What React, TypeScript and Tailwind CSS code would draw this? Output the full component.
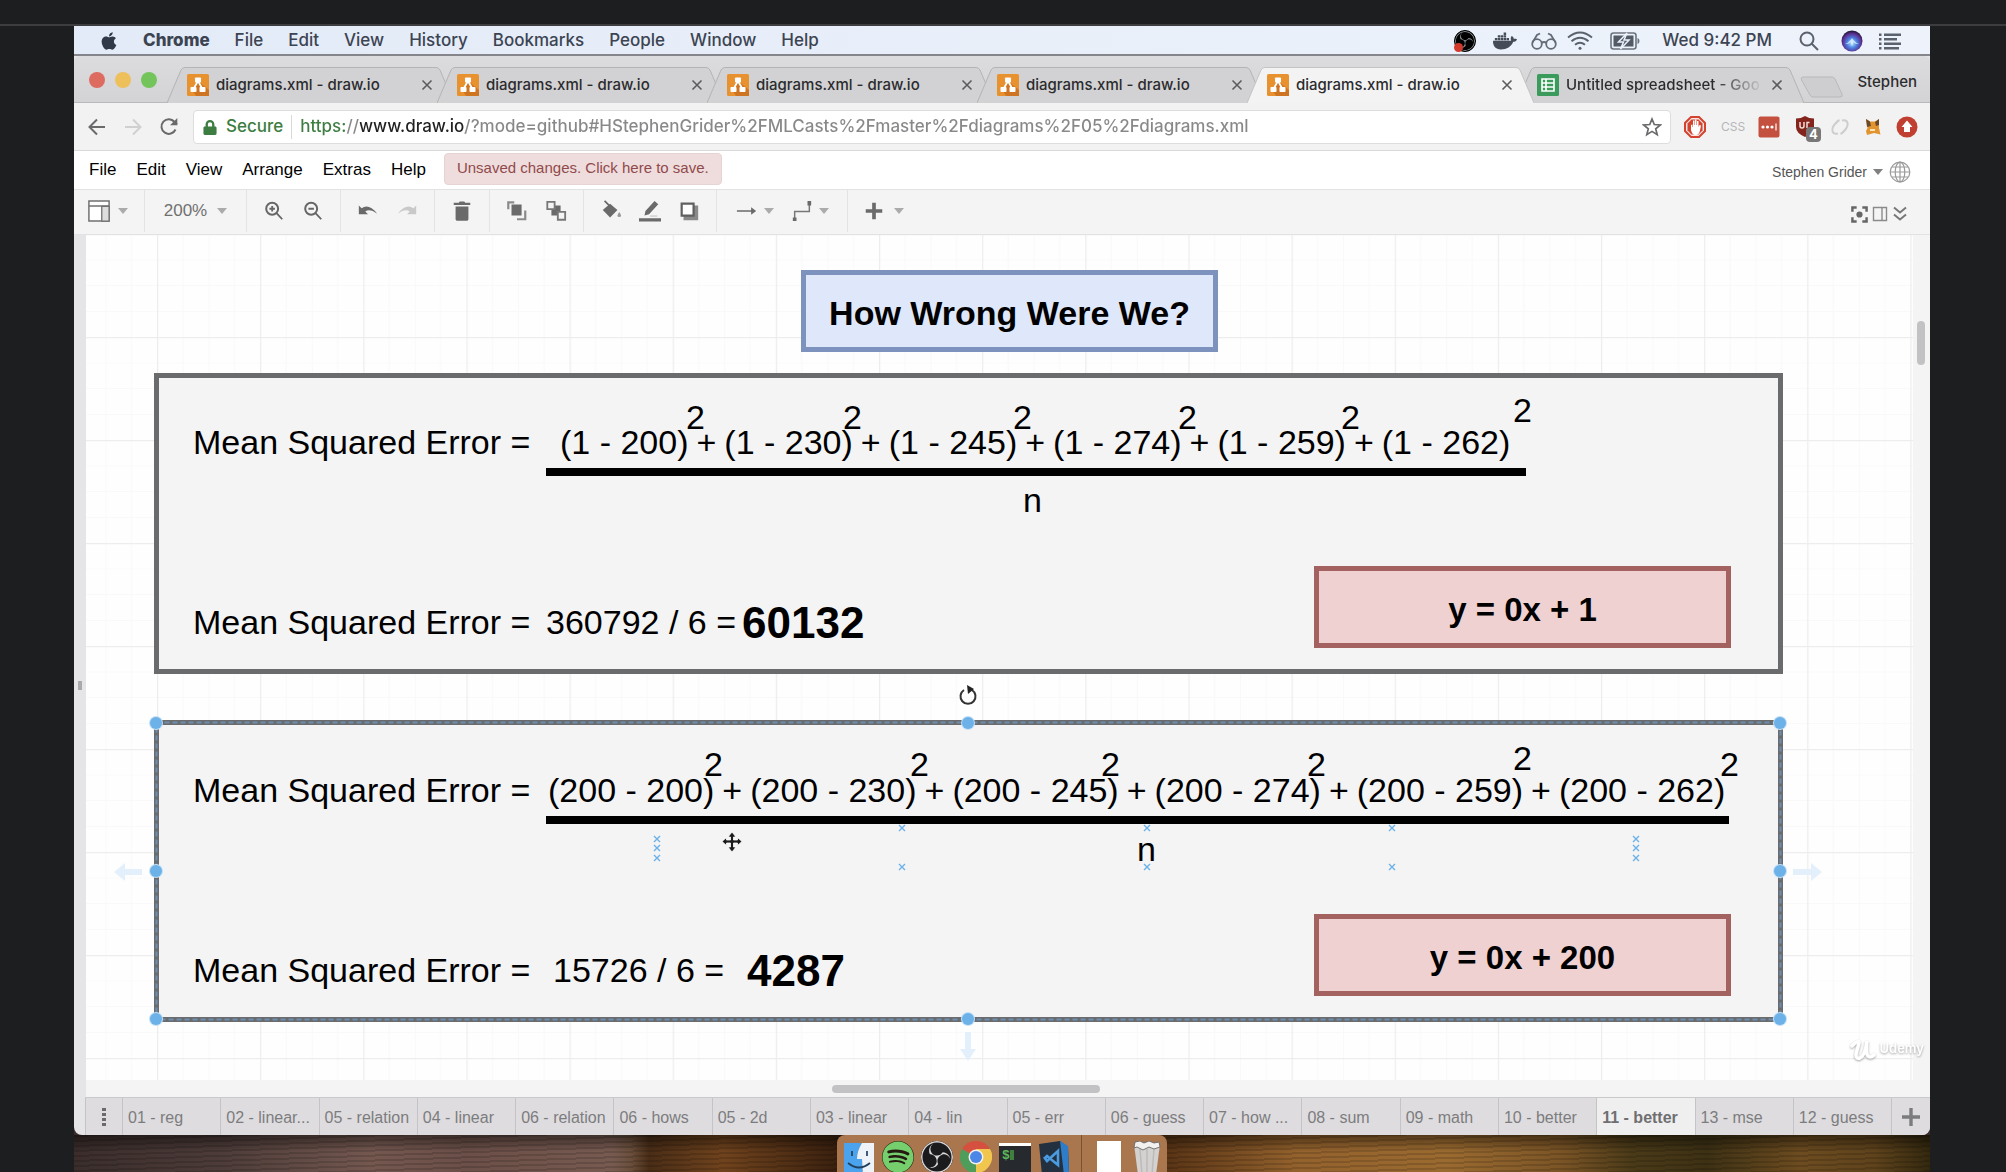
import type { ReactNode } from 'react';
import { FaApple, FaDocker, FaSpotify, FaLock } from 'react-icons/fa';
import { SiObsstudio } from 'react-icons/si';

/* ---------- icons ---------- */

const DrawioIcon = () => (
  <svg viewBox="0 0 22 22" className="h-[22px] w-[22px] shrink-0">
    <rect width="22" height="22" rx="1.5" fill="#e8912f" />
    <path d="M11 7 22 16v6H9L6 17z" fill="#cf7420" />
    <path d="M11 7 6.500 15M11 7l4.500 8" stroke="#fff" strokeWidth="1.800" />
    <rect x="8" y="3.500" width="6" height="5" rx=".8" fill="#fff" />
    <rect x="3.500" y="13" width="6" height="5" rx=".8" fill="#fff" />
    <rect x="12.500" y="13" width="6" height="5" rx=".8" fill="#fff" />
  </svg>
);

const SheetsIcon = () => (
  <svg viewBox="0 0 22 22" className="h-[22px] w-[22px] shrink-0">
    <rect width="22" height="22" rx="1.500" fill="#3a9b5c" />
    <path d="M5 5h12v12H5zM9 5v12M5 9h12M5 13h12" fill="none" stroke="#fff" strokeWidth="1.600" />
  </svg>
);

const Close = () => (
  <svg viewBox="0 0 12 12" className="h-3 w-3">
    <path d="M1.500 1.500l9 9M10.500 1.500l-9 9" stroke="#5c5c5e" strokeWidth="1.600" fill="none" />
  </svg>
);

const Caret = ({ dark }: { dark?: boolean }) => (
  <svg viewBox="0 0 10 6" className="h-[6px] w-[10px]">
    <path d="M0 0h10L5 6z" fill={dark ? '#808080' : '#ababab'} />
  </svg>
);

const Glasses = () => (
  <svg viewBox="0 0 26 22" className="h-[22px] w-[26px]" fill="none" stroke="#646b76" strokeWidth="1.800">
    <circle cx="6" cy="14" r="4.800" />
    <circle cx="20" cy="14" r="4.800" />
    <path d="M10.500 13q2.500-2 5 0M1.500 12.500 6 5l3-1.500M24.500 12.500 20 5l-3-1.500" />
  </svg>
);

const Wifi = () => (
  <svg viewBox="0 0 26 20" className="h-5 w-[26px]" fill="none" stroke="#5b626d" strokeWidth="1.900">
    <path d="M1 6.500Q13-3.500 25 6.500M4.500 10.200q8.500-7 17 0M8 13.700q5-4 10 0" />
    <circle cx="13" cy="17.300" r="1.500" fill="#5b626d" stroke="none" />
  </svg>
);

const Battery = () => (
  <svg viewBox="0 0 30 18" className="h-[18px] w-[30px]">
    <rect x="1" y="1" width="25" height="16" rx="2.500" fill="none" stroke="#6d737d" strokeWidth="1.600" />
    <path d="M27.500 6v6q2-.5 2-3t-2-3z" fill="#6d737d" />
    <rect x="3.500" y="3.500" width="20" height="11" fill="#545b67" />
    <path d="M17 1 8.500 10h5L10.500 17 19 8h-5z" fill="#545b67" stroke="#ebf1fb" strokeWidth="1.500" />
  </svg>
);

const Magnifier = () => (
  <svg viewBox="0 0 20 20" className="h-5 w-5" fill="none" stroke="#5b626d" strokeWidth="2">
    <circle cx="8" cy="8" r="6.500" />
    <path d="m12.500 12.500 6.500 6.500" />
  </svg>
);

const Siri = () => (
  <svg viewBox="0 0 22 22" className="h-[22px] w-[22px]">
    <defs>
      <radialGradient id="siri" cx=".5" cy=".6" r=".6">
        <stop offset="0" stopColor="#bfe9ff" />
        <stop offset=".4" stopColor="#4a7fe0" />
        <stop offset=".75" stopColor="#5b2f8f" />
        <stop offset="1" stopColor="#16142c" />
      </radialGradient>
    </defs>
    <circle cx="11" cy="11" r="10.500" fill="url(#siri)" />
    <path d="M4 14q4-1 7-6 3 5 7 6-4 .5-5.500-2L11 16l-1.500-4Q8 14.500 4 14z" fill="#d9f1ff" opacity=".85" />
  </svg>
);

const ListIcon = () => (
  <svg viewBox="0 0 24 18" className="h-[18px] w-6" fill="#5b626d">
    <path d="M6 1.500h17v2.500H6zM6 6h13v2.500H6zM6 10.500h17V13H6zM6 15h15v2.500H6z" />
    <path d="M1 1.500h2.500v2.500H1zM1 6h2.500v2.500H1zM1 10.500h2.500V13H1zM1 15h2.500v2.500H1z" />
  </svg>
);

const BackArrow = ({ faint }: { faint?: boolean }) => (
  <svg viewBox="0 0 18 18" className="h-[18px] w-[18px]" fill="none" stroke={faint ? '#d0d0d0' : '#6a6a6c'} strokeWidth="2">
    {faint ? <path d="M1 9h15M9 1.500 16.500 9 9 16.500" /> : <path d="M17 9H2M9 1.500 1.500 9 9 16.500" />}
  </svg>
);

const Reload = () => (
  <svg viewBox="0 0 20 20" className="h-5 w-5" fill="none" stroke="#6a6a6c" strokeWidth="2">
    <path d="M16.500 12.500A7.300 7.300 0 1 1 15.500 5L18 7.500" />
    <path d="M18.300 1v7.300H11z" fill="#6a6a6c" stroke="none" />
  </svg>
);

const Star = () => (
  <svg viewBox="0 0 20 20" className="h-5 w-5" fill="none" stroke="#6a6a6c" strokeWidth="1.700">
    <path d="m10 2 2.300 5.500 6 .5-4.600 3.800 1.500 5.800L10 14.400l-5.200 3.200 1.500-5.800L1.700 8l6-.5z" />
  </svg>
);

const AdBlock = () => (
  <svg viewBox="0 0 22 22" className="h-[22px] w-[22px]">
    <path d="M7 1h8l6 6v8l-6 6H7l-6-6V7z" fill="#f6e7e5" stroke="#d3432f" strokeWidth="2" />
    <path d="M7.500 3.500h7l4 4v7l-4 4h-7l-4-4v-7z" fill="#d3432f" />
    <path d="M7 9v5q1 5 4.500 5T16 14.500l1-5-1.500-.5-1 2V5H13v4h-.5V3.500H11V9h-.5V4.500H9V11h-.5V8.500z" fill="#fff" />
  </svg>
);

const PassIcon = () => (
  <svg viewBox="0 0 22 22" className="h-[22px] w-[22px]">
    <rect x=".5" y=".5" width="21" height="21" rx="2" fill="#c4503f" />
    <circle cx="5" cy="11" r="1.600" fill="#fff" />
    <circle cx="9.500" cy="11" r="1.600" fill="#fff" />
    <circle cx="14" cy="11" r="1.600" fill="#fff" />
    <path d="M18 7.500v7" stroke="#fff" strokeWidth="1.200" />
  </svg>
);

const Shield = () => (
  <svg viewBox="0 0 20 22" className="h-[22px] w-5">
    <path d="M10 0q4 2.500 9 2.500V11q0 6-9 10Q1 17 1 11V2.500Q6 2.500 10 0z" fill="#84251d" />
    <path d="M5 6v4q0 2 2 2t2-2V6M12 12V6.500h2.500" fill="none" stroke="#f2dcda" strokeWidth="1.500" />
  </svg>
);

const Orbit = () => (
  <svg viewBox="0 0 20 20" className="h-5 w-5" fill="none" stroke="#cdcdcf" strokeWidth="2">
    <path d="M8 16.500C2 18 .5 12 5 7q3-3.500 4.500-4M12 3.500C18 2 19.500 8 15 13q-3 3.500-4.500 4" />
  </svg>
);

const Cat = () => (
  <svg viewBox="0 0 16 18" className="h-[18px] w-4">
    <path d="M1 1l4 2.500h5L14 1v9l1.500 6.500L9 15l-7 2-1-4 1.500-3z" fill="#e2952f" />
    <path d="M1 1l4 2.500L6 8 2 9zM10 4l4-3v6l-3 1z" fill="#6b4a2a" />
    <path d="M5 11h5v2H5z" fill="#f8e2b8" />
  </svg>
);

const UpArrow = () => (
  <svg viewBox="0 0 22 22" className="h-[22px] w-[22px]">
    <circle cx="11" cy="11" r="10.500" fill="#c03f31" />
    <path d="M11 4.500 16.500 11H14v5H8v-5H5.500z" fill="#fff" />
  </svg>
);

const Globe = () => (
  <svg viewBox="0 0 22 22" className="h-[22px] w-[22px]" fill="none" stroke="#9a9a9a" strokeWidth="1.200">
    <circle cx="11" cy="11" r="9.800" />
    <ellipse cx="11" cy="11" rx="4.800" ry="9.800" />
    <path d="M11 1v20M1 11h20M3 6h16M3 16h16" />
  </svg>
);

/* toolbar glyphs share one 24-unit grid */
const Tool = ({ children, faint }: { children: ReactNode; faint?: boolean }) => (
  <svg viewBox="0 0 24 24" className="h-[22px] w-[22px]" fill={faint ? '#c9c9c9' : '#6a6a6a'}>
    {children}
  </svg>
);

/* ---------- browser chrome ---------- */

function BrowserTab({ title, icon, active, faded }: { title: string; icon: ReactNode; active?: boolean; faded?: boolean }) {
  return (
    <div className={active ? 'relative z-10 -ml-[17px] h-9 w-[287px] shrink' : 'relative -ml-[17px] h-9 w-[287px] shrink'}>
      <svg viewBox="0 0 287 36" preserveAspectRatio="none" className="absolute inset-0 h-full w-full">
        <path
          d="M0 36 14 3Q15.500.5 18 .5H269Q271.500.5 273 3L287 36"
          fill={active ? '#f4f3f4' : '#d2d1d3'}
          stroke={active ? '#c4c3c5' : '#b4b3b5'}
        />
      </svg>
      <div className="relative flex h-full items-center gap-[7px] pr-[21px] pl-5">
        {icon}
        <span
          className={
            faded
              ? 'min-w-0 flex-1 bg-gradient-to-r from-[#2b2b2d] from-75% to-transparent to-100% bg-clip-text text-[15px] font-medium whitespace-nowrap text-transparent'
              : 'min-w-0 flex-1 overflow-hidden text-[15px] font-medium whitespace-nowrap text-[#2b2b2d]'
          }
        >
          {title}
        </span>
        <button type="button" aria-label={`Close ${title}`}>
          <Close />
        </button>
      </div>
    </div>
  );
}

function MenuBar() {
  const items = ['File', 'Edit', 'View', 'History', 'Bookmarks', 'People', 'Window', 'Help'];
  return (
    <header className="flex h-7 items-center bg-gradient-to-r from-[#e3ebf8] to-[#eef3fb] pt-[2px] pr-7 pl-[26px] text-[17px] font-medium text-[#3c4452]">
      <nav aria-label="System menu" className="flex items-center gap-[25px]">
        <button type="button" aria-label="Apple menu">
          <FaApple className="h-5 w-[18px] text-[#303947]" />
        </button>
        <button type="button" className="font-extrabold">Chrome</button>
        {items.map((item) => (
          <button type="button" key={item}>{item}</button>
        ))}
      </nav>
      <div className="ml-auto flex items-center">
        <span className="relative mr-[17px] block h-[22px] w-[22px]">
          <SiObsstudio className="h-[22px] w-[22px] rounded-full border border-black bg-black text-[#8f9399]" />
          <span className="absolute bottom-0 left-0 h-[9px] w-[9px] rounded-full bg-[#d43a2c]" />
        </span>
        <FaDocker className="mr-[14px] h-6 w-6 text-[#454c58]" />
        <span className="mr-[10px]"><Glasses /></span>
        <span className="mr-[17px]"><Wifi /></span>
        <span className="mr-[22px]"><Battery /></span>
        <span className="mr-[27px]">Wed 9:42 PM</span>
        <button type="button" aria-label="Spotlight" className="mr-[22px]"><Magnifier /></button>
        <button type="button" aria-label="Siri" className="mr-[15px]"><Siri /></button>
        <button type="button" aria-label="Notification centre"><ListIcon /></button>
      </div>
    </header>
  );
}

function TabStrip() {
  return (
    <div className="flex h-[47px] items-end rounded-t-md bg-gradient-to-b from-[#dcdbdd] to-[#d3d2d4] shadow-[inset_0_-1px_0_#b9b8ba]">
      <div className="mb-[15px] ml-[15px] flex w-[95px] gap-[10px]">
        <button type="button" aria-label="Close window" className="h-4 w-4 rounded-full bg-[#dd6b60]" />
        <button type="button" aria-label="Minimise window" className="h-4 w-4 rounded-full bg-[#eec05c]" />
        <button type="button" aria-label="Zoom window" className="h-4 w-4 rounded-full bg-[#74c45c]" />
      </div>
      <BrowserTab title="diagrams.xml - draw.io" icon={<DrawioIcon />} />
      <BrowserTab title="diagrams.xml - draw.io" icon={<DrawioIcon />} />
      <BrowserTab title="diagrams.xml - draw.io" icon={<DrawioIcon />} />
      <BrowserTab title="diagrams.xml - draw.io" icon={<DrawioIcon />} />
      <BrowserTab title="diagrams.xml - draw.io" icon={<DrawioIcon />} active />
      <BrowserTab title="Untitled spreadsheet - Goo" icon={<SheetsIcon />} faded />
      <button type="button" aria-label="New tab" className="mb-[5px] -ml-[4px]">
        <svg viewBox="0 0 44 22" className="h-[22px] w-11">
          <path d="M3 1h29q2 0 3 2l7 15q1 3-2 3H13q-2 0-3-2L1.500 4Q.5 1 3 1z" fill="#cecdcf" stroke="#b9b8ba" />
        </svg>
      </button>
      <button type="button" className="mr-[13px] mb-[10px] ml-auto text-[15px] font-medium text-[#2b2b2d]">Stephen</button>
    </div>
  );
}

function AddressBar() {
  return (
    <div className="flex h-12 items-center border-b border-[#d9d8da] bg-[#f3f2f3] pt-px pr-3 pl-[14px]">
      <button type="button" aria-label="Back"><BackArrow /></button>
      <button type="button" aria-label="Forward" className="ml-[18px]"><BackArrow faint /></button>
      <button type="button" aria-label="Reload" className="mr-[14px] ml-[17px]"><Reload /></button>
      <div className="flex h-[34px] min-w-0 flex-1 items-center rounded border border-[#dddcde] bg-white px-2 text-[17px] font-medium">
        <FaLock className="mr-2 h-[15px] w-4 text-[#3d7d41]" />
        <span className="text-[#3d7d41]">Secure</span>
        <span className="mx-2 h-6 w-px bg-[#d8d8d8]" />
        <input
          aria-label="Address"
          className="min-w-0 flex-1 bg-[linear-gradient(90deg,#3d7d41_45px,#88888a_45px,#88888a_60px,#202022_60px,#202022_165px,#88888a_165px)] bg-clip-text text-transparent outline-none"
          defaultValue="https://www.draw.io/?mode=github#HStephenGrider%2FMLCasts%2Fmaster%2Fdiagrams%2F05%2Fdiagrams.xml"
        />
        <button type="button" aria-label="Bookmark this page"><Star /></button>
      </div>
      <div className="ml-[13px] flex items-center gap-[15px]">
        <button type="button" aria-label="Ad blocker"><AdBlock /></button>
        <button type="button" className="w-[22px] text-xs text-[#b5b5b7]">CSS</button>
        <button type="button" aria-label="Password manager"><PassIcon /></button>
        <button type="button" aria-label="Content blocker, 4 blocked" className="relative">
          <Shield />
          <span className="absolute -right-[6px] -bottom-[4px] h-[15px] w-[15px] rounded-sm bg-[#777] text-center text-[13px] leading-[15px] font-bold text-white">4</span>
        </button>
        <button type="button" aria-label="Orbit extension"><Orbit /></button>
        <button type="button" aria-label="Cat extension"><Cat /></button>
        <button type="button" aria-label="Update"><UpArrow /></button>
      </div>
    </div>
  );
}

/* ---------- diagram editor ---------- */

function EditorMenu() {
  return (
    <div className="flex h-[38px] items-center bg-white pr-[19px] pl-[15px] font-['Liberation_Sans',Arial,sans-serif]">
      <nav aria-label="Editor menu" className="flex items-center gap-5 text-[17px] text-black">
        {['File', 'Edit', 'View', 'Arrange', 'Extras', 'Help'].map((item) => (
          <button type="button" key={item}>{item}</button>
        ))}
      </nav>
      <button type="button" className="mb-[3px] ml-[18px] h-8 rounded border border-[#e6d3d4] bg-[#efdcdd] px-3 text-[15px] whitespace-nowrap text-[#8f4a4b]">
        Unsaved changes. Click here to save.
      </button>
      <button type="button" className="mt-1 ml-auto flex items-center gap-[6px] text-sm text-[#555]">
        Stephen Grider <Caret dark />
      </button>
      <button type="button" aria-label="Language" className="mt-1 ml-[6px]"><Globe /></button>
    </div>
  );
}

function Toolbar() {
  const group = 'flex h-full items-center justify-center border-r border-[#e3e3e3]';
  return (
    <div className="flex h-[46px] items-center border-t border-b border-[#e2e2e2] bg-[#f4f4f4] pb-[2px] font-['Liberation_Sans',Arial,sans-serif] text-[17px] text-[#707070]">
      <div className={`${group} w-[71px] pr-[2px]`}>
        <button type="button" aria-label="View" className="flex items-center gap-2">
          <Tool>
            <path d="M1 1h22v22H1z" fill="#fff" stroke="#707070" strokeWidth="1.600" />
            <path d="M15 7h8v16h-8z" fill="#ddd" stroke="#707070" strokeWidth="1.400" />
            <path d="M1 6.500h22" stroke="#707070" strokeWidth="1.600" />
          </Tool>
          <Caret />
        </button>
      </div>
      <div className={`${group} w-[102px]`}>
        <button type="button" className="flex items-center gap-[10px]">200% <Caret /></button>
      </div>
      <div className={`${group} w-[94px] gap-[17px]`}>
        <button type="button" aria-label="Zoom in">
          <Tool>
            <circle cx="10" cy="9.500" r="6.500" fill="none" stroke="#666" strokeWidth="2.200" />
            <path d="m15 14.500 6 6.500M7 9.500h6M10 6.500v6" stroke="#666" strokeWidth="2" />
          </Tool>
        </button>
        <button type="button" aria-label="Zoom out">
          <Tool>
            <circle cx="10" cy="9.500" r="6.500" fill="none" stroke="#666" strokeWidth="2.200" />
            <path d="m15 14.500 6 6.500M7 9.500h6" stroke="#666" strokeWidth="2" />
          </Tool>
        </button>
      </div>
      <div className={`${group} w-[94px] gap-[17px]`}>
        <button type="button" aria-label="Undo">
          <Tool><path d="M2 6l3 3q8-5.500 17 6-8-6-13-2.500l3 3H2z" /></Tool>
        </button>
        <button type="button" aria-label="Redo">
          <Tool faint><path d="M22 6l-3 3Q11 3.500 2 15q8-6 13-2.500l-3 3h10z" /></Tool>
        </button>
      </div>
      <div className={`${group} w-[55px]`}>
        <button type="button" aria-label="Delete">
          <Tool><path d="M3 3H8.500l1-1.500h5L15.500 3H21v2.500H3zM5 7h14v14q0 1.500-1.500 1.500h-11Q5 22.500 5 21z" /></Tool>
        </button>
      </div>
      <div className={`${group} w-[94px] gap-[17px]`}>
        <button type="button" aria-label="To front">
          <Tool>
            <path d="M6 5h11v12H6z" />
            <path d="M9 2.500H2.500V10M21 11.500V21h-9" fill="none" stroke="#8a8a8a" strokeWidth="2.400" />
          </Tool>
        </button>
        <button type="button" aria-label="To back">
          <Tool>
            <path d="M7 6h10v11H7z" />
            <path d="M2.500 2h8v8h-8zM14 13h8v8.500h-8z" fill="#f4f4f4" stroke="#777" strokeWidth="2" />
          </Tool>
        </button>
      </div>
      <div className={`${group} w-[133px] gap-[17px]`}>
        <button type="button" aria-label="Fill colour">
          <Tool>
            <path d="M3 11 11 4l8 7-8 8z" />
            <path d="m5 1 6 6" stroke="#666" strokeWidth="1.800" />
            <path d="M21 13q-4 5.500 0 5.500t0-5.500z" fill="#999" />
          </Tool>
        </button>
        <button type="button" aria-label="Line colour">
          <Tool>
            <path d="M-1 20h26v3.500H-1zM6 17l1-5L17 1l4 3.500-10 11z" />
            <path d="M12 17.500h8" stroke="#bbb" />
          </Tool>
        </button>
        <button type="button" aria-label="Shadow">
          <Tool>
            <path d="M6 6h16v16H6z" fill="#8a8a8a" />
            <path d="M4 4h13v13H4z" fill="#fff" stroke="#606060" strokeWidth="2.400" />
          </Tool>
        </button>
      </div>
      <div className={`${group} w-[131px] gap-[17px]`}>
        <button type="button" aria-label="Connection" className="flex items-center gap-[6px]">
          <Tool><path d="M1 11.300h15.500V8l5.500 4-5.500 4v-3.200H1z" /></Tool>
          <Caret />
        </button>
        <button type="button" aria-label="Waypoints" className="flex items-center gap-[6px]">
          <Tool>
            <path d="M4 22V12.500h16V3" fill="none" stroke="#777" strokeWidth="1.600" />
            <path d="M2 19h4v4H2zM18 1h4v5h-4z" />
          </Tool>
          <Caret />
        </button>
      </div>
      <div className="flex h-full items-center pl-[15px]">
        <button type="button" aria-label="Insert" className="flex items-center gap-[9px]">
          <Tool><path d="M10 3h4v7h7v4h-7v7h-4v-7H3v-4h7z" /></Tool>
          <Caret />
        </button>
      </div>
      <div className="mt-[6px] mr-[22px] ml-auto flex items-center gap-1">
        <button type="button" aria-label="Fullscreen">
          <svg viewBox="0 0 18 18" className="h-[17px] w-[17px]" fill="none" stroke="#666" strokeWidth="2.600">
            <path d="M1.500 6V1.500H6M12 1.500h4.500V6M16.500 12v4.500H12M6 16.500H1.500V12" />
            <circle cx="9" cy="9" r="2" fill="#666" />
          </svg>
        </button>
        <button type="button" aria-label="Format panel">
          <svg viewBox="0 0 16 16" className="h-4 w-4" fill="none" stroke="#8a8a8a" strokeWidth="1.400">
            <path d="M1.500 1.500h13v13h-13zM10 1.500v13" />
          </svg>
        </button>
        <button type="button" aria-label="Collapse">
          <svg viewBox="0 0 16 16" className="h-4 w-4" fill="none" stroke="#777" strokeWidth="2">
            <path d="m2 1.500 6 5 6-5M2 8.500l6 5 6-5" />
          </svg>
        </button>
      </div>
    </div>
  );
}

const label = 'absolute text-[34px] leading-10 whitespace-pre text-black';
const total = 'absolute text-[44px] leading-[52px] font-bold text-black';
const panel = 'absolute left-[68px] w-[1629px] border-[5px] border-[#6a6b6c] bg-[#f4f4f5]';
const equation =
  'absolute left-[1228px] flex h-[82px] w-[417px] items-center justify-center border-[5px] border-[#a3625f] bg-[#efd1d2] pt-[6px] text-[33px] font-bold text-black';

const squares = [
  'left-[600px] top-[162px]', 'left-[757px] top-[162px]', 'left-[927px] top-[162px]',
  'left-[1092px] top-[162px]', 'left-[1255px] top-[162px]', 'left-[1427px] top-[155px]',
  'left-[618px] top-[509px]', 'left-[824px] top-[509px]', 'left-[1015px] top-[509px]',
  'left-[1221px] top-[509px]', 'left-[1427px] top-[503px]', 'left-[1634px] top-[509px]',
];

const handles = [
  'left-[64px] top-[482px]', 'left-[876px] top-[482px]', 'left-[1688px] top-[482px]',
  'left-[64px] top-[630px]', 'left-[1688px] top-[630px]',
  'left-[64px] top-[778px]', 'left-[876px] top-[778px]', 'left-[1688px] top-[778px]',
];

const anchors = [
  [571, 604], [571, 613], [571, 623], [816, 593], [816, 632], [1061, 593],
  [1061, 632], [1306, 593], [1306, 632], [1550, 604], [1550, 613], [1550, 623],
];

function Sum({ terms, place }: { terms: string[]; place: string }) {
  return (
    <div className={`absolute flex gap-2 text-[34px] leading-10 whitespace-nowrap text-black ${place}`}>
      {terms.map((term, i) => (
        <span key={term} className="flex gap-2">
          {i > 0 && <span>+</span>}
          <span>{term}</span>
        </span>
      ))}
    </div>
  );
}

function Canvas() {
  const seen = [200, 230, 245, 274, 259, 262];
  return (
    <main className="relative min-h-[845px] min-w-0 flex-1 overflow-hidden bg-[#fefefe] font-['Liberation_Sans',Arial,sans-serif]">
      <svg className="absolute inset-0 h-full w-full">
        <defs>
          <pattern id="grid" x="71" y="102" width="103.140" height="103" patternUnits="userSpaceOnUse">
            <path d="M26 0v103M52 0v103M77.500 0v103M0 26h103.140M0 51.500h103.140M0 77.500h103.140" stroke="#f9f9fa" fill="none" />
            <path d="M.5 0v103M0 .5h103.140" stroke="#ededee" strokeWidth="1.500" fill="none" />
          </pattern>
        </defs>
        <rect width="100%" height="100%" fill="url(#grid)" />
      </svg>

      <div className="absolute top-[35px] left-[715px] flex h-[82px] w-[417px] items-center justify-center border-[5px] border-[#7d93bd] bg-[#dfe8fa] pt-1 text-[34px] font-bold text-black">
        How Wrong Were We?
      </div>

      <div className={`${panel} top-[138px] h-[301px]`} />
      <div className={`${panel} top-[485px] h-[302px]`} />

      <div className={`${label} top-[187px] left-[107px]`}>Mean Squared Error =</div>
      <Sum place="top-[187px] left-[474px]" terms={seen.map((v) => `(1 - ${v})`)} />
      <div className="absolute top-[233px] left-[460px] h-2 w-[980px] bg-black" />
      <div className={`${label} top-[245px] left-[937px]`}>n</div>
      <div className={`${label} top-[367px] left-[107px]`}>Mean Squared Error =</div>
      <div className={`${label} top-[367px] left-[460px]`}>360792 / 6 =</div>
      <div className={`${total} top-[362px] left-[656px]`}>60132</div>
      <div className={`${equation} top-[331px]`}>y = 0x + 1</div>

      <div className={`${label} top-[535px] left-[107px]`}>Mean Squared Error =</div>
      <Sum place="top-[535px] left-[462px]" terms={seen.map((v) => `(200 - ${v})`)} />
      <div className="absolute top-[581px] left-[460px] h-2 w-[1183px] bg-black" />
      <div className={`${label} top-[594px] left-[1051px]`}>n</div>
      <div className={`${label} top-[715px] left-[107px]`}>Mean Squared Error =</div>
      <div className={`${label} top-[715px] left-[467px]`}>15726 / 6 =</div>
      <div className={`${total} top-[710px] left-[661px]`}>4287</div>
      <div className={`${equation} top-[679px]`}>y = 0x + 200</div>

      {squares.map((place) => (
        <div key={place} className={`${label} ${place}`}>2</div>
      ))}

      {/* selection outline, connection points and direction arrows */}
      <svg className="absolute inset-0 h-full w-full" fill="none">
        <rect x="70.500" y="487.500" width="1624" height="297" stroke="#6d8db0" strokeWidth="2" strokeDasharray="5 3" />
        {anchors.map(([x, y]) => (
          <path key={`${x}-${y}`} d={`M${x - 3} ${y - 3}l6 6m0-6-6 6`} stroke="#6cb1e8" strokeWidth="1.400" />
        ))}
        <g fill="#e3f0fc">
          <path d="M28 637l11-9v6h17v6H39v6z" />
          <path d="M1736 637l-11-9v6h-18v6h18v6z" />
          <path d="M882 826l-8-12h5v-17h6v17h5z" />
        </g>
        <g stroke="#333" strokeWidth="2">
          <path d="M878 455a7.500 7.500 0 1 0 8 0" />
          <path d="M881 450l7 4-6 5z" fill="#222" stroke="none" />
        </g>
        <path
          d="M646 597l4 5h-2.500v3h4v-2.500l4.500 4-4.500 4V608h-4v4h2.500l-4 5-4-5h2.500v-4h-4v2.500l-4.500-4 4.500-4v2.500h4v-3H642z"
          fill="#1c1c1c"
          stroke="#fff"
          strokeWidth=".8"
        />
      </svg>
      {handles.map((place) => (
        <button
          type="button"
          key={place}
          aria-label="Resize handle"
          className={`absolute h-3 w-3 rounded-full bg-[#6cb1e8] ring-1 ring-[#c5e0f6] ${place}`}
        />
      ))}
    </main>
  );
}

function PageTabs() {
  const pages = [
    '01 - reg', '02 - linear...', '05 - relation', '04 - linear', '06 - relation', '06 - hows',
    '05 - 2d', '03 - linear', '04 - lin', '05 - err', '06 - guess', '07 - how ...', '08 - sum',
    '09 - math', '10 - better', '11 - better', '13 - mse', '12 - guess',
  ];
  return (
    <footer className="ml-[11px] flex h-[38px] border-t border-[#c9c8ca] bg-[#dedcdf] font-['Liberation_Sans',Arial,sans-serif] text-[#7c7c7e]">
      <button type="button" aria-label="Pages" className="flex w-[38px] shrink-0 items-center justify-center border-r border-l border-[#c4c3c5]">
        <svg viewBox="0 0 4 18" className="h-[18px] w-1" fill="#6a6a6c">
          <path d="M0 0h4v3H0zM0 5h4v3H0zM0 10h4v3H0zM0 15h4v3H0z" />
        </svg>
      </button>
      {pages.map((page) => (
        <button
          type="button"
          key={page}
          className={
            page === '11 - better'
              ? 'min-w-0 flex-1 overflow-hidden border-r border-[#c4c3c5] bg-[#f0eff0] pt-[2px] pl-[5px] text-left text-base font-bold whitespace-nowrap text-[#6f6f71]'
              : 'min-w-0 flex-1 overflow-hidden border-r border-[#c4c3c5] pt-[2px] pl-[5px] text-left text-base whitespace-nowrap'
          }
        >
          {page}
        </button>
      ))}
      <button type="button" aria-label="Insert page" className="flex w-[38px] shrink-0 items-center justify-center">
        <svg viewBox="0 0 18 18" className="h-[18px] w-[18px]" fill="#7c7c7e">
          <path d="M7.300 0h3.400v7.300H18v3.400h-7.300V18H7.300v-7.300H0V7.300h7.300z" />
        </svg>
      </button>
    </footer>
  );
}

/* ---------- dock ---------- */

function Dock() {
  return (
    <div className="flex h-[37px] justify-center overflow-hidden bg-[linear-gradient(180deg,rgba(0,0,0,0.45),transparent_45%),repeating-linear-gradient(178deg,rgba(0,0,0,0.14)_0_2px,transparent_2px_5px),linear-gradient(90deg,#3a2d2b_0%,#4d3c39_8%,#745850_16%,#6b4f48_21%,#775b51_29%,#6b4f3c_30%,#4a2d16_31%,#70431d_35%,#3b210f_41%,#5a3516_59%,#94622d_66%,#9a6a30_74%,#7c5526_80%,#4a3a18_84%,#3d3114_88%,#6d4c20_93%,#5f431c_97%,#33280f_100%)]">
      <div className="flex h-12 items-start gap-[7px] rounded-t-lg bg-[#a9764e] px-[6px] pt-[6px]">
        <button type="button" aria-label="Finder">
          <svg viewBox="0 0 32 34" className="h-[34px] w-8">
            <path d="M1 2h18q-5 8-5 16h5l1 16H1z" fill="#4aa3ec" />
            <path d="M19 2h12v32H20l-1-16h-5q0-8 5-16z" fill="#eef3fa" />
            <path d="M9 10v5M24 10v5M5 22q11 9 22 0" stroke="#20405f" strokeWidth="1.700" fill="none" />
          </svg>
        </button>
        <button type="button" aria-label="Spotify" className="h-8 w-8 rounded-full bg-[#241a12]">
          <FaSpotify className="h-8 w-8 text-[#74cf6c]" />
        </button>
        <button type="button" aria-label="OBS" className="h-8 w-8 rounded-full">
          <SiObsstudio className="h-8 w-8 rounded-full bg-[#1b1a1c] text-[#d8d5d6]" />
        </button>
        <button type="button" aria-label="Chrome">
          <svg viewBox="0 0 32 32" className="h-8 w-8">
            <path d="M16 16 2.140 8A16 16 0 0 1 29.860 8z" fill="#d5503f" />
            <path d="M16 16 29.860 8A16 16 0 0 1 16 32z" fill="#f0c64e" />
            <path d="M16 16v16A16 16 0 0 1 2.140 8z" fill="#4f9d5b" />
            <path d="M16 8h13.860q1.500 2.500 1.800 5L22 20z" fill="#f0c64e" />
            <circle cx="16" cy="16" r="7.500" fill="#f3f1ef" />
            <circle cx="16" cy="16" r="6" fill="#4c86e6" />
          </svg>
        </button>
        <button type="button" aria-label="Terminal" className="mt-[2px] flex h-9 w-8 items-start border-t-[3px] border-white bg-[#26292d] pt-[2px] pl-[3px] font-['Liberation_Mono',monospace] text-[13px] leading-4 font-bold text-[#5cb85a]">
          $<span className="mt-[2px] h-[10px] w-1 bg-[#3f7f3f]" />
        </button>
        <button type="button" aria-label="Code editor">
          <svg viewBox="0 0 32 34" className="h-[34px] w-8">
            <path d="M1 3 22 0l8 6 1 28H4z" fill="#22303f" />
            <path d="M22 0l8 5 1 27-5 2z" fill="#2f7cc8" />
            <path d="M20 10v14L9 15l-3 3M20 24V10L9 20l-3-4" fill="none" stroke="#4a9be0" strokeWidth="2.600" />
          </svg>
        </button>
        <span className="mx-1 -mt-[6px] h-12 w-px bg-[#7c5233]" />
        <button type="button" aria-label="Document" className="ml-1 h-10 w-6 bg-white" />
        <button type="button" aria-label="Trash" className="ml-[5px]">
          <svg viewBox="0 0 28 34" className="h-[34px] w-7">
            <path d="M1 3h26l-4 31H5z" fill="#d4d2d1" />
            <path d="M7 8l2 26M14 8v26M21 8l-2 26" stroke="#bdbab9" strokeWidth="1.500" />
            <path d="M2 1l5-1 4 2 5-2 5 2 5-1 1 5-6 2-5-2-6 3-6-3-3 1z" fill="#f2f1f0" stroke="#6a6665" strokeWidth=".9" />
          </svg>
        </button>
      </div>
    </div>
  );
}

export default function App() {
  return (
    <div className="flex min-h-screen flex-col bg-[#1d1e20] font-['Inter',sans-serif]">
      <div className="h-[26px] border-b-2 border-[#3d3d3f]" />
      <div className="mr-[76px] ml-[74px] flex flex-1 flex-col bg-[#3a2d2b]">
        <MenuBar />
        <div className="relative flex flex-1 flex-col overflow-hidden rounded-b-lg border-t-2 border-[#85868c] bg-[#e5e4e6]">
          <TabStrip />
          <AddressBar />
          <EditorMenu />
          <Toolbar />
          <div className="flex flex-1 bg-[#f4f4f5]">
            <div className="flex w-3 items-center bg-[#e5e4e6]">
              <span className="mt-14 ml-1 h-[9px] w-1 bg-[#a9a9ab]" />
            </div>
            <Canvas />
            <div className="w-[17px] bg-[#f4f4f5] pt-[86px] pl-1">
              <div className="h-11 w-2 rounded-full bg-[#c2c2c4]" />
            </div>
          </div>
          <div className="ml-3 flex h-[17px] items-center bg-[#f4f4f5] pl-[746px]">
            <div className="h-2 w-[268px] rounded-full bg-[#c2c2c4]" />
          </div>
          <PageTabs />
          <div className="absolute right-[6px] bottom-[74px] flex items-center gap-[3px] text-white drop-shadow-[0_1px_1px_rgba(0,0,0,0.35)]">
            <svg viewBox="0 0 26 24" className="h-6 w-[26px]" fill="none" stroke="#fff" strokeWidth="3.500" strokeLinecap="round">
              <path d="M2 9Q9 2 9 6L6 17q-.5 5 4 4 5-2 7-17-2 16 3 16 2 0 4-2" />
            </svg>
            <span className="text-[13px] font-semibold">Udemy</span>
          </div>
        </div>
        <Dock />
      </div>
    </div>
  );
}
